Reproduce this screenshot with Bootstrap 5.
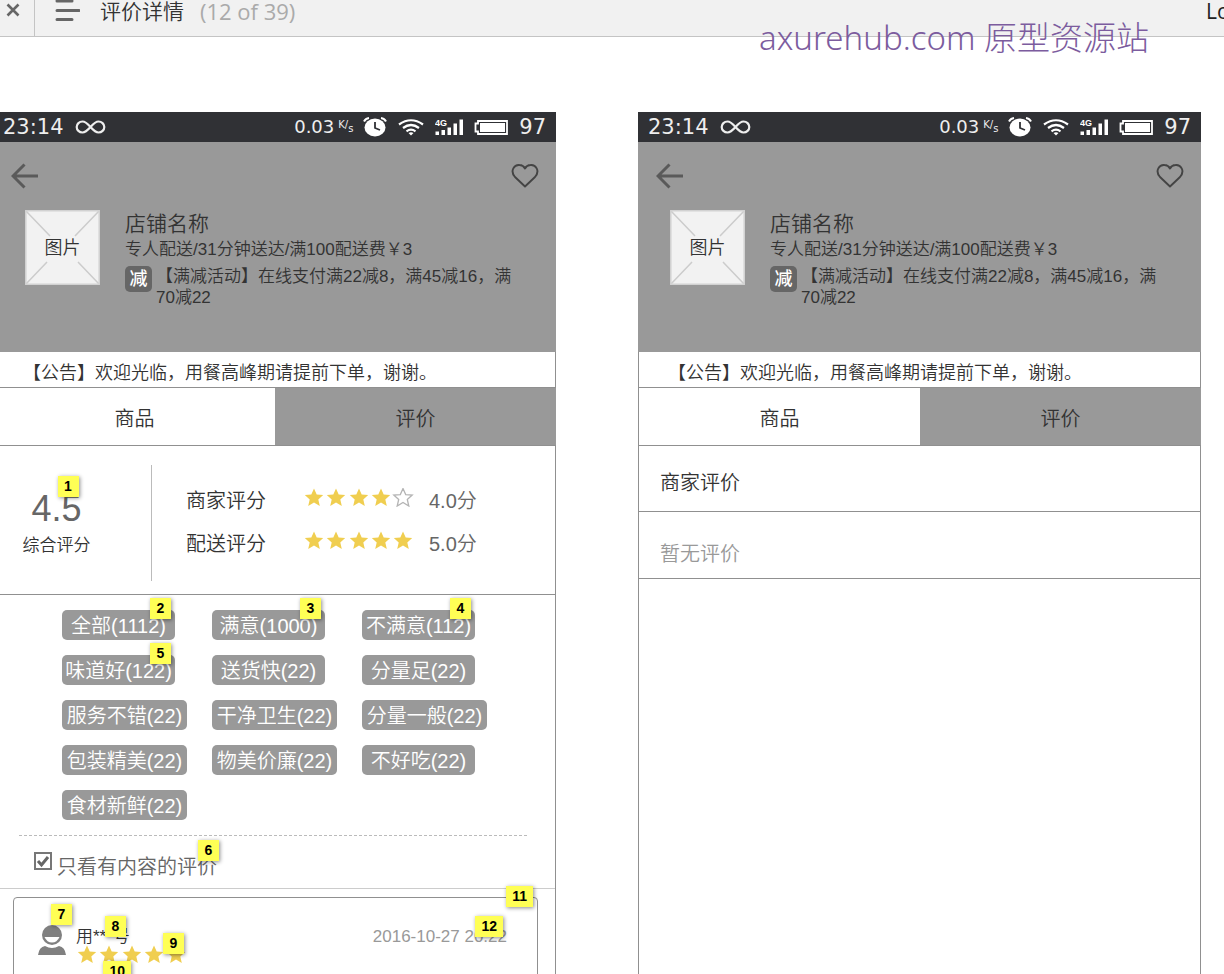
<!DOCTYPE html>
<html lang="zh-CN">
<head>
<meta charset="utf-8">
<meta name="viewport" content="width=device-width, initial-scale=1">
<title>评价详情</title>
<link href="https://cdn.jsdelivr.net/npm/bootstrap@5.3.0/dist/css/bootstrap.min.css" rel="stylesheet">
<style>
  :root { --line: #909090; --fill: #999; --ink: #333; --soft: #666; }
  body { font-family: "Liberation Sans", "Noto Sans CJK SC", sans-serif; font-weight: 350; font-size: 20px; line-height: 30px; color: var(--ink); background: #fff; }
  button, input { font: inherit; color: inherit; }

  /* viewer toolbar */
  .toolbar { height: 37px; background: #f1f1f1; border-bottom: 1px solid #c4c4c4; font-family: "Open Sans", "Noto Sans CJK SC", sans-serif; font-size: 21px; line-height: 22px; }
  .toolbar button { background: none; border: 0; padding: 0; }
  .toolbar .close-box { display: flex; align-items: flex-start; width: 35px; border-right: 1px solid #c4c4c4; padding: 3px 0 0 6px; }
  .page-count { color: #aaa; font-size: 22px; font-weight: 400; }
  .login-link { width: 18px; color: #222; text-decoration: none; font-weight: 400; }
  .watermark { top: 14px; right: 75px; color: #7c5c9e; font: 300 33px/48px "Noto Sans", "Noto Sans CJK SC", sans-serif; }

  /* canvas with the two screens */
  .canvas { display: grid; grid-template-columns: 1fr 1fr; gap: 82px; margin: 75px 23px 0 -7px; min-height: 0; }
  .screen { border: solid var(--line); border-width: 0 1px; min-width: 0; }
  .statusbar { gap: 11px; height: 30px; margin: 0 -1px; padding: 0 10px; background: #303135; color: #eee; font-family: "DejaVu Sans", sans-serif; font-weight: 400; font-size: 21px; }
  .rate { font-size: 18px; }
  .per-sec { width: 14px; margin-left: -7px; font-size: 10px; line-height: 14px; }
  .hero { height: 210px; margin: 0 -1px; padding: 21px 17px 0 18px; background: var(--fill); }
  .hero button { background: none; border: 0; padding: 0; line-height: 0; }
  .shop { gap: 25px; padding: 21px 20px 0 14px; }
  .thumb { width: 75px; height: 75px; font-size: 18px; }
  .shop-name { font-size: 21px; line-height: 28px; }
  .detail { font-size: 17px; line-height: 21px; }
  .fee { line-height: 24px; }
  .cut-mark { width: 27px; height: 26px; border-radius: 5px; background: var(--soft); color: #fff; font-weight: 500; font-size: 18px; line-height: 26px; }
  .notice { height: 36px; padding: 7px 29px 0; font-size: 18px; line-height: 28px; border-bottom: 1px solid var(--line); }
  .tabs { height: 58px; margin-right: -1px; border-bottom: 1px solid var(--line); }
  .tabs button { flex: 1; border: 0; padding: 4px 0 0; background: #fff; }
  .tabs .current { background: var(--fill); }

  /* score summary */
  .summary { height: 149px; padding: 19px 0 13px 7px; border-bottom: 1px solid var(--line); }
  .overall { width: 151px; border-right: 1px solid #bbb; padding: 23px 58px 0 19px; }
  .big-score { display: block; padding: 0 1px; font-size: 36px; line-height: 42px; color: var(--soft); }
  .overall .detail { padding-top: 5px; }
  .scores { display: grid; grid-template-columns: 117px 126px auto; align-items: start; align-content: start; row-gap: 13px; padding: 21px 0 0 34px; }
  .scores svg { margin-top: 2px; }
  .value { color: var(--soft); }

  /* tag filters */
  .tags { display: grid; grid-template-columns: repeat(3, 150px); row-gap: 15px; justify-items: start; margin: 0 28px 0 25px; padding: 15px 0 15px 43px; border-bottom: 1px dashed #bbb; }
  .tag { min-width: 113px; height: 30px; padding: 1px 3px 0; border: 0; border-radius: 5px; background: var(--fill); color: #fff; line-height: 30px; white-space: nowrap; }
  .tag-wide { min-width: 125px; }
  .only-text { height: 53px; padding: 16px 0 0 40px; color: var(--soft); border-bottom: 1px solid #ccc; }
  .only-text input { appearance: none; width: 18px; height: 18px; margin: 0 5px 0 0; border: 2px solid #777; background: #fff url("data:image/svg+xml,%3Csvg xmlns='http://www.w3.org/2000/svg' viewBox='0 0 14 14'%3E%3Cpath d='M2 7l3.5 4L12 3' fill='none' stroke='%23666' stroke-width='3'/%3E%3C/svg%3E") center / 14px; }

  /* review */
  .review { margin: 8px 17px 0 19px; padding: 26px 30px 120px 24px; border: 1px solid var(--line); border-radius: 4px; font-size: 17px; line-height: 17px; }
  .review time { color: #999; }
  .review-body { margin-left: 10px; }
  .comment { width: 59px; height: 30px; margin-top: 9px; }

  /* numbered footnote markers */
  .note { position: absolute; top: -12px; right: 4px; min-width: 21px; height: 21px; padding: 0 6px; background: #ffff55; box-shadow: 1px 1px 4px rgba(0,0,0,.45); color: #000; font: bold 14px/21px "Liberation Sans", sans-serif; text-align: center; z-index: 1; }
  .note-out { top: -20px; right: -6px; }
  .note-edge { right: -2px; }

  .row-title { height: 66px; padding: 22px 21px 0; border-bottom: 1px solid var(--line); }
  .row-none { height: 67px; padding: 27px 21px 0; border-bottom: 1px solid var(--line); color: #999; }
</style>
</head>
<body class="vh-100 d-flex flex-column overflow-hidden position-relative">

<svg width="0" height="0" class="position-absolute" aria-hidden="true">
  <defs>
    <path id="star" d="M0-9.5L2.7-3.4 9.2-2.9 4.3 1.4 5.8 8 0 4.5-5.8 8-4.3 1.4-9.2-2.9-2.7-3.4z"/>
    <symbol id="stars5" viewBox="0 1 112 19"><g fill="#f0ce50"><use href="#star" x="11" y="11"/><use href="#star" x="33" y="11"/><use href="#star" x="56" y="11"/><use href="#star" x="78" y="11"/><use href="#star" x="100" y="11"/></g></symbol>
    <symbol id="stars4" viewBox="0 1 112 19"><g fill="#f0ce50"><use href="#star" x="11" y="11"/><use href="#star" x="33" y="11"/><use href="#star" x="56" y="11"/><use href="#star" x="78" y="11"/></g><use href="#star" x="100" y="11" fill="#fff" stroke="#b4b4b4" stroke-width="1.3"/></symbol>
    <symbol id="infinity" viewBox="0 0 31 14"><path d="M15.500 7C12 3 10 1.500 7.500 1.500a5.800 5.500 0 0 0 0 11C10 12.500 12 11 15.500 7S21 1.500 23.500 1.500a5.800 5.500 0 0 1 0 11C21 12.500 19 11 15.500 7z" fill="none" stroke="#eee" stroke-width="2.200"/></symbol>
    <symbol id="alarm" viewBox="0 0 24 20"><ellipse cx="12" cy="10.500" rx="10.500" ry="9" fill="#fff"/><path d="M1 4.500Q2.500 1.500 6 1M23 4.500Q21.500 1.500 18 1" fill="none" stroke="#fff" stroke-width="2"/><path d="M12 5v6l5 2" fill="none" stroke="#303135" stroke-width="1.800"/></symbol>
    <symbol id="wifi" viewBox="0 0 26 17"><g fill="none" stroke="#fff" stroke-width="2.200"><path d="M1 5.500Q13-3 25 5.500M5 9Q13 3 21 9M8.500 12.300Q13 9 17.500 12.300"/></g><path d="M10.500 14q2.500-1.500 5 0L13 16.500z" fill="#fff"/></symbol>
    <symbol id="signal" viewBox="0 0 28 18"><path d="M.5 13.500h3.500V17H.5zM6.500 12H10v5H6.500zM12.500 9.500H16V17h-3.500zM18.500 5.500H22V17h-3.500zM24.500 1.500H28V17h-3.500z" fill="#fff"/><text x="0" y="7.500" font-family="Liberation Sans, sans-serif" font-weight="700" font-size="9" fill="#fff">4G</text></symbol>
    <symbol id="battery" viewBox="0 0 34 15"><path d="M4 1h29v13H4v-2.500H1.500v-8H4z" fill="none" stroke="#fff" stroke-width="1.800"/><path d="M6 3h25v9H6z" fill="#fff"/></symbol>
    <symbol id="back" viewBox="0 0 28 26"><path d="M27 13H2M13.500 1.500L2 13l11.500 11.500" fill="none" stroke="#5a5a5a" stroke-width="3"/></symbol>
    <symbol id="heart" viewBox="0 0 28 26"><path d="M14 23.500L4 14C-1.500 7.500 3.500 1.500 8.500 2 11.500 2.200 13 3.500 14 5.500 15 3.500 16.500 2.200 19.500 2 24.500 1.500 29.500 7.500 24 14z" fill="none" stroke="#444" stroke-width="1.900" stroke-linejoin="round"/></symbol>
    <symbol id="frame" viewBox="0 0 75 75"><path d="M.5.500h74v74H.5z" fill="#f2f2f2"/><path d="M1 1l24 25M74 1L50 26M1 74l21-22M74 74L53 52" stroke="#ccc" stroke-width="1.500"/><path d="M.8.800h73.400v73.400H.8z" fill="none" stroke="#d2d2d2" stroke-width="1.500"/></symbol>
  </defs>
</svg>

<header class="toolbar d-flex flex-shrink-0 overflow-hidden">
  <button class="close-box" type="button" aria-label="关闭"><svg width="14" height="14" viewBox="0 0 14 14"><path d="M1.500 1.500l11 11M12.500 1.500l-11 11" stroke="#666" stroke-width="2.600"/></svg></button>
  <button class="align-self-start ms-3 ps-1" type="button" aria-label="菜单"><svg class="d-block" width="25" height="22" viewBox="0 0 25 22"><path d="M2 1h15M2 10.500h22M2 19.500h15" stroke="#666" stroke-width="3" stroke-linecap="round"/></svg></button>
  <span class="ms-3 ps-1">评价详情</span>
  <span class="page-count ms-3">(12 of 39)</span>
  <a class="login-link ms-auto overflow-hidden" href="#">Lo</a>
</header>
<div class="watermark position-absolute">axurehub.com 原型资源站</div>

<main class="canvas flex-grow-1">
  <section class="screen">
    <div class="statusbar d-flex align-items-center">
      <span>23:14</span><svg class="me-auto" width="31" height="14"><use href="#infinity"/></svg>
      <span class="rate">0.03</span><span class="per-sec d-flex"><span class="align-self-start mb-1">K</span>/<span class="mt-1">s</span></span>
      <svg width="24" height="20"><use href="#alarm"/></svg><svg width="26" height="17"><use href="#wifi"/></svg>
      <svg width="28" height="18"><use href="#signal"/></svg><svg width="34" height="15"><use href="#battery"/></svg><span>97</span>
    </div>
    <div class="hero">
      <div class="d-flex justify-content-between">
        <button type="button" aria-label="返回"><svg width="28" height="26"><use href="#back"/></svg></button>
        <button type="button" aria-label="收藏"><svg width="28" height="26"><use href="#heart"/></svg></button>
      </div>
      <div class="shop d-flex">
        <div class="thumb position-relative flex-shrink-0"><svg width="75" height="75" class="d-block"><use href="#frame"/></svg><span class="position-absolute top-50 start-50 translate-middle text-nowrap">图片</span></div>
        <div>
          <div class="shop-name">店铺名称</div>
          <div class="detail fee text-nowrap">专人配送/31分钟送达/满100配送费￥3</div>
          <div class="d-flex gap-1"><span class="cut-mark flex-shrink-0 text-center mt-1">减</span><span class="detail pt-1">【满减活动】在线支付满22减8，满45减16，满70减22</span></div>
        </div>
      </div>
    </div>
    <div class="notice text-nowrap">【公告】欢迎光临，用餐高峰期请提前下单，谢谢。</div>
    <div class="tabs d-flex"><button type="button">商品</button><button type="button" class="current">评价</button></div>

    <div class="summary d-flex">
      <div class="overall flex-shrink-0 text-center text-nowrap">
        <div class="position-relative d-inline-block align-top"><span class="big-score">4.5</span><span class="note">1</span></div>
        <div class="detail">综合评分</div>
      </div>
      <div class="scores">
        <span>商家评分</span><svg width="112" height="19"><use href="#stars4"/></svg><span class="value">4.0分</span>
        <span>配送评分</span><svg width="112" height="19"><use href="#stars5"/></svg><span class="value">5.0分</span>
      </div>
    </div>

    <div class="tags">
      <button type="button" class="tag position-relative">全部(1112)<span class="note">2</span></button>
      <button type="button" class="tag position-relative">满意(1000)<span class="note">3</span></button>
      <button type="button" class="tag position-relative">不满意(112)<span class="note">4</span></button>
      <button type="button" class="tag position-relative">味道好(122)<span class="note">5</span></button>
      <button type="button" class="tag">送货快(22)</button>
      <button type="button" class="tag">分量足(22)</button>
      <button type="button" class="tag tag-wide">服务不错(22)</button>
      <button type="button" class="tag tag-wide">干净卫生(22)</button>
      <button type="button" class="tag tag-wide">分量一般(22)</button>
      <button type="button" class="tag tag-wide">包装精美(22)</button>
      <button type="button" class="tag tag-wide">物美价廉(22)</button>
      <button type="button" class="tag">不好吃(22)</button>
      <button type="button" class="tag tag-wide">食材新鲜(22)</button>
    </div>
    <div class="only-text d-flex align-items-start">
      <input type="checkbox" id="onlyText" checked><label class="position-relative" for="onlyText">只看有内容的评价<span class="note note-edge">6</span></label>
    </div>

    <article class="review position-relative">
      <span class="note">11</span>
      <div class="d-flex align-items-start">
        <div class="position-relative"><svg class="d-block" width="28" height="32" viewBox="0 0 28 32"><circle cx="14" cy="11" r="10" fill="#808080"/><path d="M6.500 13h15Q19 18.500 14 18.500T6.500 13z" fill="#fff"/><path d="M0 31Q1 23 7 22q7 4 14 0Q27 23 28 31z" fill="#808080"/></svg><span class="note note-out">7</span></div>
        <div class="review-body flex-grow-1 pt-1">
          <div class="d-flex justify-content-between"><span class="position-relative">用***号<span class="note">8</span></span><time class="position-relative">2016-10-27 20:22<span class="note">12</span></time></div>
          <div class="d-flex"><div class="position-relative"><svg class="d-block" width="112" height="19"><use href="#stars5"/></svg><span class="note">9</span></div></div>
          <div class="comment position-relative"><span class="note">10</span></div>
        </div>
      </div>
    </article>
  </section>

  <section class="screen">
    <div class="statusbar d-flex align-items-center">
      <span>23:14</span><svg class="me-auto" width="31" height="14"><use href="#infinity"/></svg>
      <span class="rate">0.03</span><span class="per-sec d-flex"><span class="align-self-start mb-1">K</span>/<span class="mt-1">s</span></span>
      <svg width="24" height="20"><use href="#alarm"/></svg><svg width="26" height="17"><use href="#wifi"/></svg>
      <svg width="28" height="18"><use href="#signal"/></svg><svg width="34" height="15"><use href="#battery"/></svg><span>97</span>
    </div>
    <div class="hero">
      <div class="d-flex justify-content-between">
        <button type="button" aria-label="返回"><svg width="28" height="26"><use href="#back"/></svg></button>
        <button type="button" aria-label="收藏"><svg width="28" height="26"><use href="#heart"/></svg></button>
      </div>
      <div class="shop d-flex">
        <div class="thumb position-relative flex-shrink-0"><svg width="75" height="75" class="d-block"><use href="#frame"/></svg><span class="position-absolute top-50 start-50 translate-middle text-nowrap">图片</span></div>
        <div>
          <div class="shop-name">店铺名称</div>
          <div class="detail fee text-nowrap">专人配送/31分钟送达/满100配送费￥3</div>
          <div class="d-flex gap-1"><span class="cut-mark flex-shrink-0 text-center mt-1">减</span><span class="detail pt-1">【满减活动】在线支付满22减8，满45减16，满70减22</span></div>
        </div>
      </div>
    </div>
    <div class="notice text-nowrap">【公告】欢迎光临，用餐高峰期请提前下单，谢谢。</div>
    <div class="tabs d-flex"><button type="button">商品</button><button type="button" class="current">评价</button></div>
    <div class="row-title">商家评价</div>
    <div class="row-none">暂无评价</div>
  </section>
</main>
<script src="https://cdn.jsdelivr.net/npm/bootstrap@5.3.0/dist/js/bootstrap.bundle.min.js"></script>
</body>
</html>
